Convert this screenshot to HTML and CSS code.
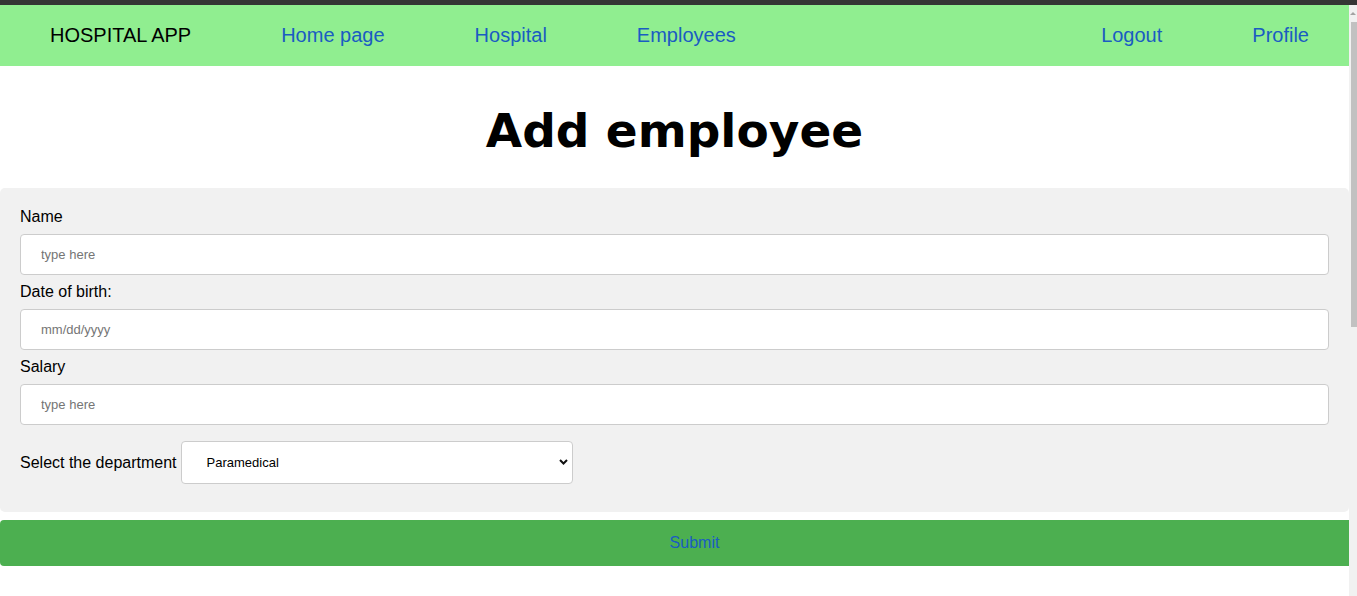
FILE: index.html
```html
<!DOCTYPE html>
<html lang="en">
<head>
<meta charset="utf-8">
<title>Hospital App - Add employee</title>
<link rel="stylesheet" href="styles.css">
</head>
<body>
<div class="topbar"></div>
<div class="frame">
  <div class="page">
    <nav class="nav">
      <ul class="nav-group">
        <li class="brand">HOSPITAL APP</li>
        <li><a href="#">Home page</a></li>
        <li><a href="#">Hospital</a></li>
        <li><a href="#">Employees</a></li>
      </ul>
      <ul class="nav-group nav-right">
        <li><a href="#">Logout</a></li>
        <li><a href="#">Profile</a></li>
      </ul>
    </nav>
    <h1 class="title">Add employee</h1>
    <form class="form">
      <div class="panel">
        <label class="label" for="name">Name</label>
        <input class="field" id="name" type="text" placeholder="type here">
        <label class="label" for="dob">Date of birth:</label>
        <input class="field" id="dob" type="text" placeholder="mm/dd/yyyy">
        <label class="label" for="salary">Salary</label>
        <input class="field" id="salary" type="text" placeholder="type here">
        <div class="select-row">
          <label class="inline-label" for="dept">Select the department</label>
          <span class="select-wrap">
            <select class="select" id="dept">
              <option>Paramedical</option>
              <option>Surgery</option>
              <option>Cardiology</option>
            </select>
            <svg class="chevron" width="9" height="6" viewBox="0 0 9 6"><path d="M1 1 L4.5 4.5 L8 1" fill="none" stroke="#111" stroke-width="2"/></svg>
          </span>
        </div>
      </div>
      <button class="submit" type="button">Submit</button>
    </form>
  </div>
  <div class="scrollbar">
    <div class="arrow"></div>
    <div class="thumb"></div>
  </div>
</div>
</body>
</html>
```
FILE: styles.css
```css
html, body {
  margin: 0;
  height: 100%;
  overflow: hidden;
  background: #ffffff;
  font-family: "Liberation Sans", Arial, sans-serif;
}

.topbar {
  height: 5px;
  background: #353535;
}

.frame {
  display: flex;
  height: calc(100% - 5px);
}

.page {
  flex: 1;
  min-width: 0;
  overflow: hidden;
}

.scrollbar {
  width: 8px;
  background: #f1f1f1;
  display: flex;
  flex-direction: column;
  align-items: flex-end;
}

.arrow {
  width: 0;
  height: 0;
  margin: 7px 1px 0 0;
  border-left: 3px solid transparent;
  border-right: 3px solid transparent;
  border-bottom: 3px solid #a3a3a3;
}

.thumb {
  width: 6px;
  height: 305px;
  margin-top: 7px;
  background: #c1c1c1;
}

.nav {
  height: 61px;
  background: #90ee90;
  display: flex;
  align-items: center;
  padding: 0 40px 0 50px;
}

.nav-group {
  list-style: none;
  margin: 0;
  padding: 0;
  display: flex;
  gap: 90px;
  font-size: 20px;
}

.nav-right {
  margin-left: auto;
}

.brand {
  color: #000000;
}

.nav a {
  color: #1a5cc2;
  text-decoration: none;
}

.title {
  font-family: "DejaVu Sans", Verdana, sans-serif;
  font-weight: bold;
  font-size: 47px;
  text-align: center;
  margin: 37px 0 30px;
  color: #000;
}

.form {
  margin: 0;
}

.panel {
  background: #f1f1f1;
  border-radius: 5px;
  padding: 20px;
}

.label {
  display: block;
  font-size: 16px;
  color: #000;
}

.field {
  display: block;
  width: 100%;
  box-sizing: border-box;
  padding: 12px 20px;
  margin: 8px 0;
  border: 1px solid #cccccc;
  border-radius: 4px;
  background: #ffffff;
  font-family: "Liberation Sans", Arial, sans-serif;
  font-size: 13px;
  line-height: 15px;
  color: #000;
}

.field::placeholder {
  color: #757575;
}

.select-row {
  display: flex;
  align-items: center;
  gap: 4px;
  font-size: 16px;
}

.select-wrap {
  position: relative;
  display: inline-block;
  width: 30%;
  margin: 8px 0;
}

.select {
  appearance: none;
  -webkit-appearance: none;
  width: 100%;
  height: 43px;
  box-sizing: border-box;
  padding: 0 20px 0 25px;
  border: 1px solid #cccccc;
  border-radius: 4px;
  background: #ffffff;
  font-family: "Liberation Sans", Arial, sans-serif;
  font-size: 13px;
  color: #000;
}

.chevron {
  position: absolute;
  right: 5px;
  top: 18px;
}

.submit {
  display: block;
  width: 100%;
  box-sizing: content-box;
  padding: 14px 20px;
  margin: 8px 0;
  border: none;
  border-radius: 4px;
  background: #4caf50;
  color: #1a5cc2;
  font-family: "Liberation Sans", Arial, sans-serif;
  font-size: 16px;
  line-height: 18px;
}
```
